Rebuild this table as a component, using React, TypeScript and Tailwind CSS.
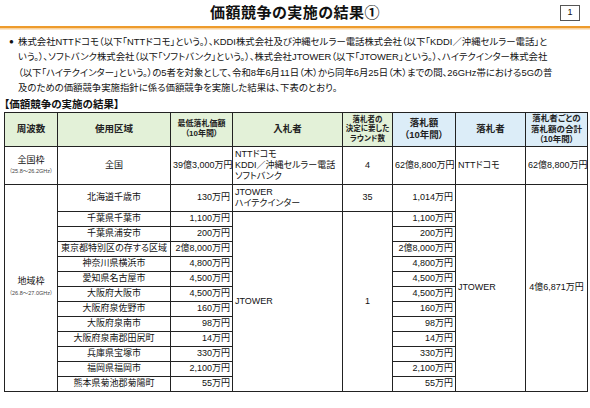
const font = {
  fontFamily: '"Liberation Sans", "Noto Sans CJK JP", sans-serif',
  fontFeatureSettings: '"palt"',
};

const regions = [
  { area: '千葉県千葉市', min: '1,100万円', bid: '1,100万円' },
  { area: '千葉県浦安市', min: '200万円', bid: '200万円' },
  { area: '東京都特別区の存する区域', min: '2億8,000万円', bid: '2億8,000万円' },
  { area: '神奈川県横浜市', min: '4,800万円', bid: '4,800万円' },
  { area: '愛知県名古屋市', min: '4,500万円', bid: '4,500万円' },
  { area: '大阪府大阪市', min: '4,500万円', bid: '4,500万円' },
  { area: '大阪府泉佐野市', min: '160万円', bid: '160万円' },
  { area: '大阪府泉南市', min: '98万円', bid: '98万円' },
  { area: '大阪府泉南郡田尻町', min: '14万円', bid: '14万円' },
  { area: '兵庫県宝塚市', min: '330万円', bid: '330万円' },
  { area: '福岡県福岡市', min: '2,100万円', bid: '2,100万円' },
  { area: '熊本県菊池郡菊陽町', min: '55万円', bid: '55万円' },
];

const td = 'border border-[#222] px-[2px] py-0 text-[9px] leading-[11px] text-[#111] whitespace-nowrap overflow-hidden';
const thG = 'border border-[#222] bg-[#e3f1d8] font-bold text-center text-[#222] whitespace-nowrap overflow-hidden p-0';
const thB = 'border border-[#222] bg-[#dcedf8] font-bold text-center text-[#222] whitespace-nowrap overflow-hidden p-0';

export default function App() {
  return (
    <div className="w-[590px] h-[408px] bg-white overflow-hidden" style={font}>
      {/* title bar */}
      <div className="relative h-[26px] flex items-center justify-center">
        <h1 className="text-[15px] font-bold text-[#111] tracking-[0.5px]">価額競争の実施の結果①</h1>
        <div className="absolute right-[10px] top-[5px] w-[20px] h-[16px] border border-[#555] flex items-center justify-center text-[9px] text-[#111]">
          1
        </div>
      </div>
      <div className="h-[2px] bg-[#ee9b2b]" />
      <div className="h-[2px] bg-gradient-to-b from-[#f7c98a] to-[#fdf0de]" />

      {/* lead text */}
      <div className="pl-[9px] pt-[4px] text-[9.4px] leading-[15.4px] text-[#111] whitespace-nowrap">
        <div className="flex">
          <span className="w-[9px] shrink-0 text-[8px]">●</span>
          <div>
            <div>株式会社NTTドコモ（以下「NTTドコモ」という。）、KDDI株式会社及び沖縄セルラー電話株式会社（以下「KDDI／沖縄セルラー電話」と</div>
            <div>いう。）、ソフトバンク株式会社（以下「ソフトバンク」という。）、株式会社JTOWER（以下「JTOWER」という。）、ハイテクインター株式会社</div>
            <div>（以下「ハイテクインター」という。）の5者を対象として、令和8年6月11日（木）から同年6月25日（木）までの間、26GHz帯における5Gの普</div>
            <div>及のための価額競争実施指針に係る価額競争を実施した結果は、下表のとおり。</div>
          </div>
        </div>
      </div>

      <div className="pl-[4px] pt-[2px] text-[10.5px] font-bold leading-[13px] text-[#111]">【価額競争の実施の結果】</div>

      <div className="pl-[4px] pt-[1px]">
        <table className="table-fixed border-collapse border-[1.5px] border-[#222] w-[583px]">
          <colgroup>
            <col className="w-[53px]" />
            <col className="w-[113px]" />
            <col className="w-[62px]" />
            <col className="w-[110px]" />
            <col className="w-[50px]" />
            <col className="w-[63px]" />
            <col className="w-[70px]" />
            <col className="w-[62px]" />
          </colgroup>
          <thead>
            <tr className="h-[34px]">
              <th className={`${thG} text-[9.5px]`}>周波数</th>
              <th className={`${thG} text-[9.5px]`}>使用区域</th>
              <th className={`${thG} text-[8px] leading-[10px]`}>最低落札価額<br />（10年間）</th>
              <th className={`${thG} text-[9.5px]`}>入札者</th>
              <th className={`${thG} text-[7.5px] leading-[9.5px]`}>落札者の<br />決定に要した<br />ラウンド数</th>
              <th className={`${thB} text-[9.5px] leading-[12px]`}>落札額<br />（10年間）</th>
              <th className={`${thB} text-[9.5px]`}>落札者</th>
              <th className={`${thB} text-[8.5px] leading-[10.5px]`}>落札者ごとの<br />落札額の合計<br />（10年間）</th>
            </tr>
          </thead>
          <tbody>
            <tr className="h-[38px]">
              <td className={`${td} text-center`}>
                <div>全国枠</div>
                <div className="text-[5.5px] leading-[10px] text-[#444]">（25.8～26.2GHz）</div>
              </td>
              <td className={`${td} text-center`}>全国</td>
              <td className={`${td} text-right`}>39億3,000万円</td>
              <td className={`${td} text-left`}>
                NTTドコモ<br />KDDI／沖縄セルラー電話<br />ソフトバンク
              </td>
              <td className={`${td} text-center`}>4</td>
              <td className={`${td} text-right`}>62億8,800万円</td>
              <td className={`${td} text-left`}>NTTドコモ</td>
              <td className={`${td} text-center`}>62億8,800万円</td>
            </tr>
            <tr className="h-[27px]">
              <td rowSpan={13} className={`${td} text-center`}>
                <div>地域枠</div>
                <div className="text-[5.5px] leading-[12px] text-[#444]">（26.8～27.0GHz）</div>
              </td>
              <td className={`${td} text-center`}>北海道千歳市</td>
              <td className={`${td} text-right`}>130万円</td>
              <td className={`${td} text-left`}>JTOWER<br />ハイテクインター</td>
              <td className={`${td} text-center`}>35</td>
              <td className={`${td} text-right`}>1,014万円</td>
              <td rowSpan={13} className={`${td} text-left`}>JTOWER</td>
              <td rowSpan={13} className={`${td} text-center`}>4億6,871万円</td>
            </tr>
            {regions.map((r, i) => (
              <tr key={r.area} className="h-[15px]">
                <td className={`${td} text-center`}>{r.area}</td>
                <td className={`${td} text-right`}>{r.min}</td>
                {i === 0 && (
                  <>
                    <td rowSpan={12} className={`${td} text-left`}>JTOWER</td>
                    <td rowSpan={12} className={`${td} text-center`}>1</td>
                  </>
                )}
                <td className={`${td} text-right`}>{r.bid}</td>
              </tr>
            ))}
          </tbody>
        </table>
      </div>
    </div>
  );
}
